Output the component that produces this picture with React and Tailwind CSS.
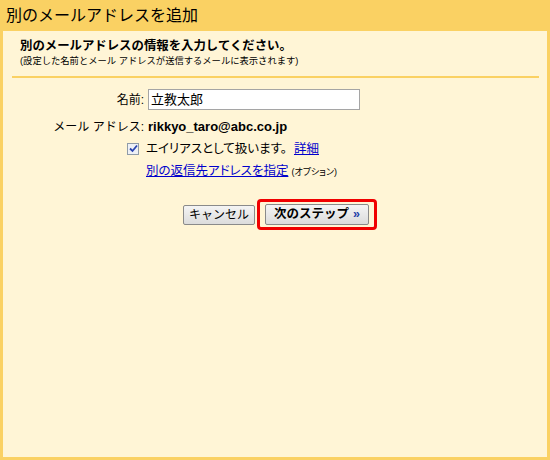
import React from 'react';

const jp = "font-['Liberation_Sans','Noto_Sans_CJK_JP',sans-serif]";

export default function App() {
  return (
    <div className={`w-[550px] h-[460px] bg-[#fad163] flex flex-col px-[3px] pb-[3px] text-black ${jp}`}>
      {/* title bar */}
      <div className="h-[31px] pl-[3px] flex items-center text-[16px] leading-none">別のメールアドレスを追加</div>

      <div className="flex-1 bg-[#fff5d6] pl-[9px] pr-[8px] pt-[7px]">
        <div className="pl-[8px]">
          <div className="text-[12.4px] font-bold leading-[16px]">別のメールアドレスの情報を入力してください。</div>
          <div className="text-[9.3px] leading-[12px] mt-[1px]">(設定した名前とメール アドレスが送信するメールに表示されます)</div>
        </div>
        <div className="h-[2px] bg-[#fad163] mt-[9px]" />

        {/* form */}
        <div className="grid grid-cols-[132px_1fr] gap-x-[4px] items-center mt-[11px] text-[12px]">
          <div className="text-right">名前:</div>
          <div className="h-[21px] w-[212px] bg-white border border-[#a5a5a5] flex items-center px-[2px] text-[13px]">立教太郎</div>

          <div className="text-right mt-[7px]">メール アドレス:</div>
          <div className="font-bold text-[13px] mt-[7px]">rikkyo_taro@abc.co.jp</div>
        </div>

        <div className="flex items-center ml-[115px] mt-[3px] text-[12.5px] [font-feature-settings:'palt']">
          <span className="w-[12px] h-[12px] border border-[#8f9ba8] bg-[#eef0f5] flex items-center justify-center">
            <svg width="9" height="9" viewBox="0 0 9 9">
              <path d="M1 4.5 L3.5 7 L8 1.5" stroke="#2a44b0" strokeWidth="1.8" fill="none" />
            </svg>
          </span>
          <span className="ml-[7px]">エイリアスとして扱います。</span>
          <span className="ml-[7px] text-[#0000cc] underline">詳細</span>
        </div>

        <div className="flex items-baseline ml-[134px] mt-[4px] text-[12.5px] [font-feature-settings:'palt']">
          <span className="text-[#0000cc] underline">別の返信先アドレスを指定</span>
          <span className="ml-[3px] text-[9px]">(オプション)</span>
        </div>

        {/* buttons */}
        <div className="flex items-center ml-[171px] mt-[18px]">
          <button className="h-[20px] px-[5px] bg-gradient-to-b from-[#f4f4f4] to-[#dcdcdc] border border-[#8a8a8a] rounded-[2px] text-[12px] leading-none">キャンセル</button>
          <div className="ml-[2px] border-[3px] border-[#f00000] rounded-[4px] px-[5px] py-[2px]">
            <button className="h-[21px] px-[8px] bg-gradient-to-b from-[#f4f4f4] to-[#dcdcdc] border border-[#8a8a8a] rounded-[2px] text-[12.5px] font-bold leading-none flex items-center">
              次のステップ<span className="ml-[4px] text-[#1e3ea8]">»</span>
            </button>
          </div>
        </div>
      </div>
    </div>
  );
}
